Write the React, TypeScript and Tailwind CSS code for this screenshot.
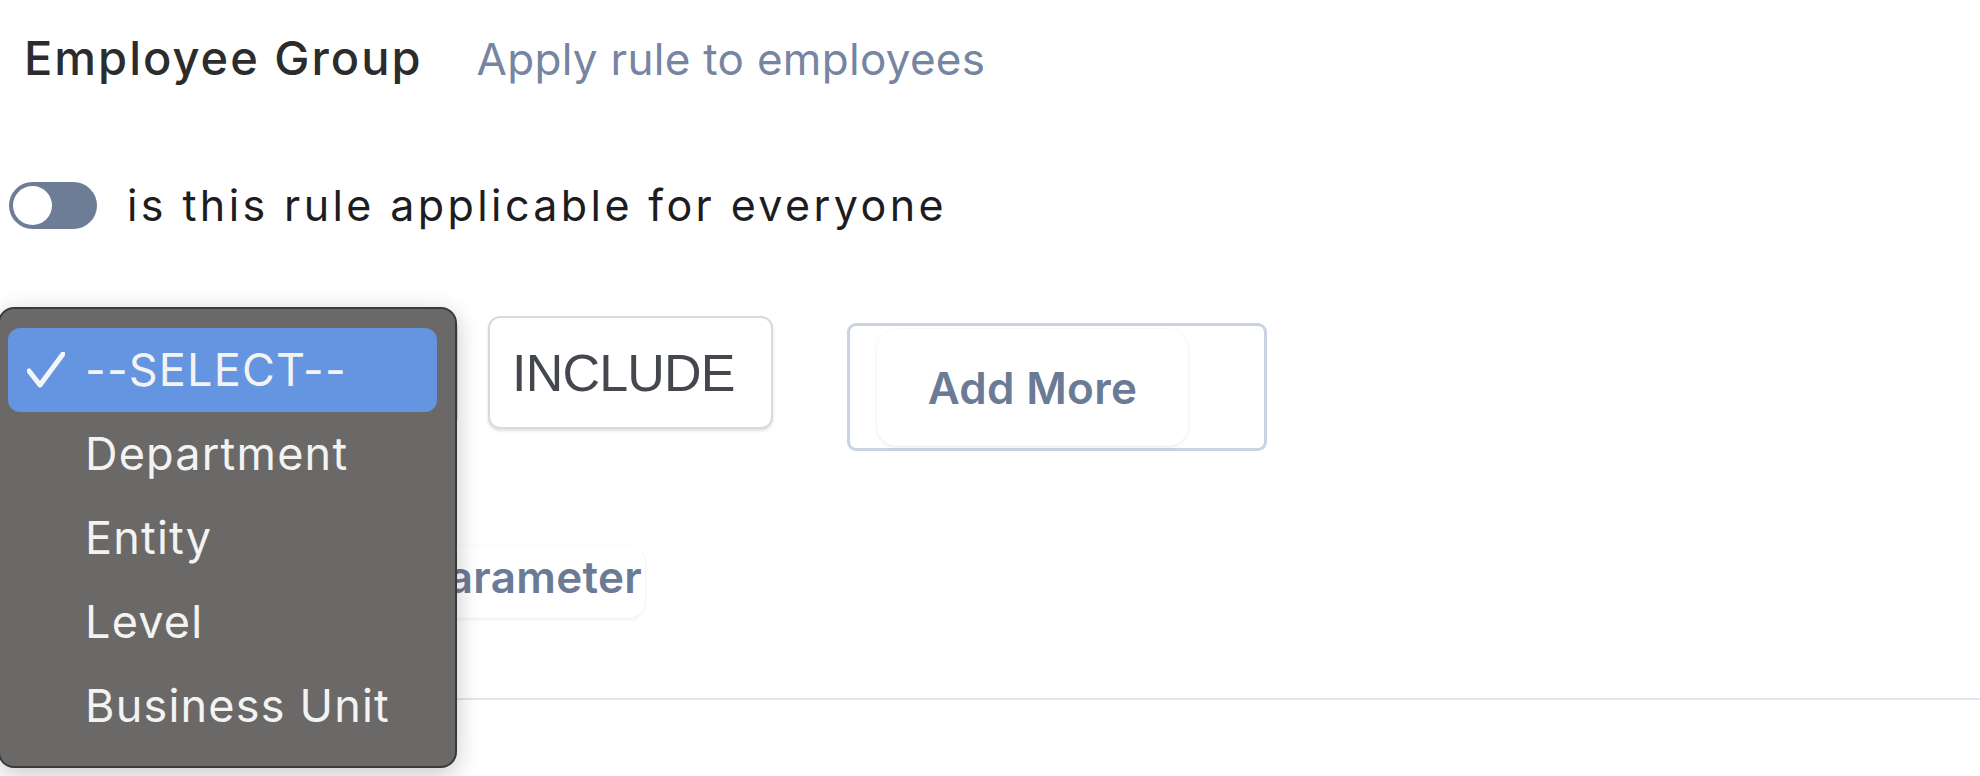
import React from 'react';

const options = ['--SELECT--', 'Department', 'Entity', 'Level', 'Business Unit'];

function CheckMark() {
  return (
    <svg width="38" height="36" viewBox="0 0 38 36" fill="none">
      <polyline points="2,19 13,33 36,2" stroke="#f4f6fb" strokeWidth="5" strokeLinecap="round" strokeLinejoin="round" />
    </svg>
  );
}

export default function App() {
  return (
    <div className="relative w-full h-[776px] bg-white overflow-hidden font-['Inter','Noto_Sans',sans-serif]">
      {/* Heading */}
      <div className="flex items-baseline pl-[24px] pt-[32px] gap-[54px]">
        <h2 className="text-[47px] leading-[52px] font-medium text-[#2c2c2c] tracking-[2px]">Employee Group</h2>
        <span className="text-[44px] leading-[52px] text-[#7585a2] tracking-[0.3px]">Apply rule to employees</span>
      </div>

      {/* Toggle row */}
      <div className="flex items-center pl-[9px] mt-[97px] gap-[30px]">
        <div className="w-[88px] h-[47px] rounded-full bg-[#6e7d96] p-[4px] flex items-center">
          <div className="w-[39px] h-[39px] rounded-full bg-white" />
        </div>
        <span className="text-[43px] leading-[47px] text-[#1d1d1f] tracking-[3.4px]">is this rule applicable for everyone</span>
      </div>

      {/* Parameter row */}
      <div className="flex items-start pl-[24px] mt-[87px]">
        <div className="w-[434px] h-[113px] rounded-[12px] border-2 border-[#d8d8d8] bg-white" />
        <div className="ml-[30px] w-[285px] h-[113px] rounded-[12px] border-2 border-[#dadada] bg-white shadow-[0_2px_3px_rgba(0,0,0,0.12)] flex items-center pl-[22px]">
          <span className="font-['Liberation_Sans',Arial,sans-serif] text-[52px] text-[#44484e] tracking-[-0.8px]">INCLUDE</span>
        </div>
        <div className="ml-[74px] mt-[7px] w-[420px] h-[128px] rounded-[9px] border-[3px] border-[#c9d3e1] pl-[27px] pt-[3px]">
          <button className="w-[311px] h-[117px] rounded-[20px] bg-white shadow-[0_0_0_1px_rgba(0,0,0,0.025),0_2px_4px_rgba(0,0,0,0.05)] flex items-center justify-center">
            <span className="text-[44px] font-semibold text-[#6b7a95] tracking-[0.3px]">Add More</span>
          </button>
        </div>
      </div>

      {/* Add parameter */}
      <div className="pl-[24px] mt-[95px]">
        <button className="w-[621px] h-[72px] rounded-[16px] bg-white shadow-[0_0_0_1px_rgba(0,0,0,0.02),0_2px_4px_rgba(0,0,0,0.05)] flex items-center justify-end pr-[3px] pb-[10px]">
          <span className="text-[44px] font-semibold text-[#6b7a95] tracking-[0.3px]">Add Parameter</span>
        </button>
      </div>

      {/* Divider */}
      <div className="mt-[80px] h-[2px] bg-[#e0e6ef]" />

      {/* Native select menu */}
      <div className="absolute left-[-2px] top-[307px] w-[459px] h-[461px] rounded-[16px] border-2 border-[#3a3a3a] bg-[#6a6967] shadow-[0_6px_24px_rgba(0,0,0,0.22)] pt-[19px] pl-[8px] pr-[18px]">
        {options.map((opt, i) => (
          <div
            key={opt}
            className={`h-[84px] flex items-center rounded-[12px] ${i === 0 ? 'bg-[#6595e0]' : ''}`}
          >
            <div className="w-[77px] pl-[19px] flex items-center">{i === 0 && <CheckMark />}</div>
            <span className="text-[45px] text-[#f3f3f3] tracking-[1.2px]">{opt}</span>
          </div>
        ))}
      </div>
    </div>
  );
}
